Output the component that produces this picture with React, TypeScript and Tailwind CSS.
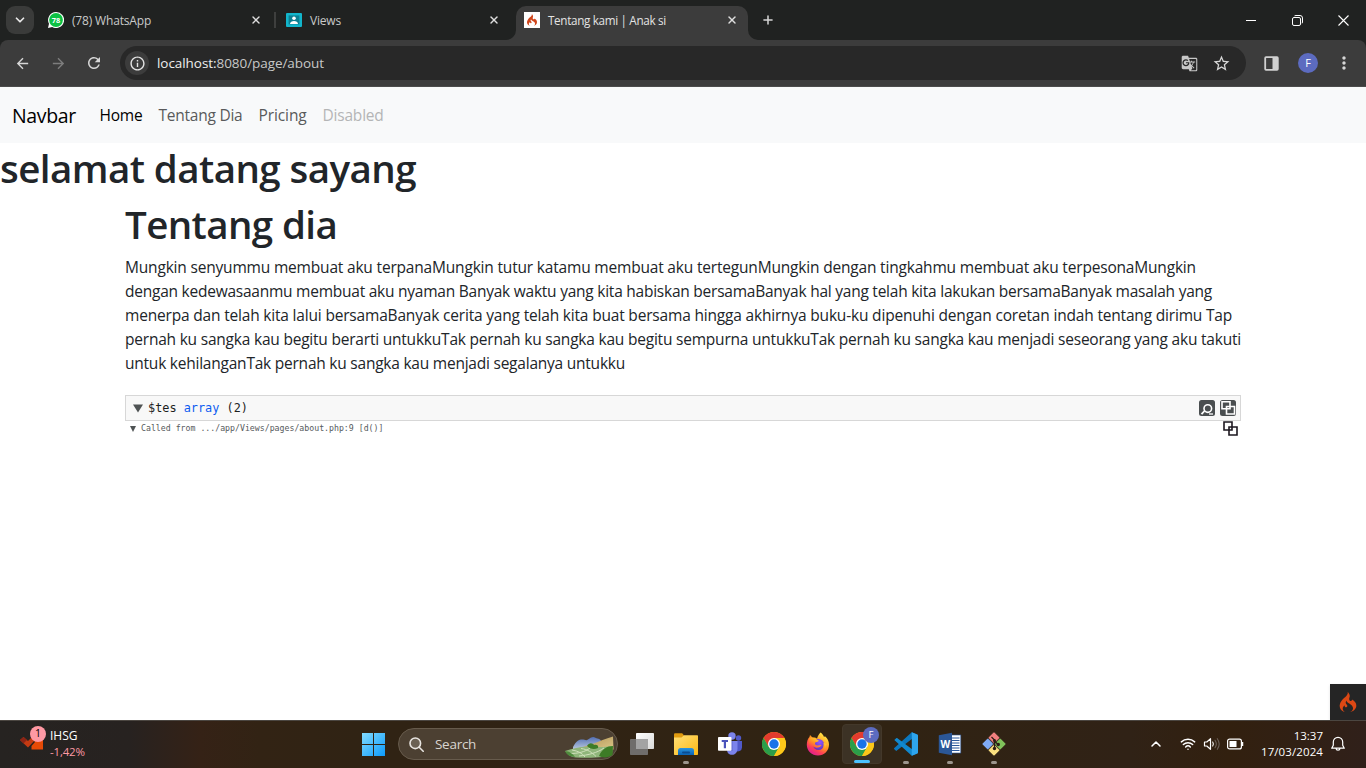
import type { ReactNode } from "react";
import { MdArrowBack, MdArrowForward, MdRefresh, MdInfoOutline, MdGTranslate, MdStarBorder, MdMoreVert } from "react-icons/md";
import { SiCodeigniter } from "react-icons/si";
import { ChevronDown, ChevronUp, X, Plus, Wifi } from "lucide-react";

function WhatsAppIcon() {
  return (
    <svg className="h-4 w-4 shrink-0" viewBox="0 0 16 16">
      <path d="M8 0a8 8 0 1 1-3.8 15L0 16l1-4.2A8 8 0 0 1 8 0Z" fill="#fff" />
      <circle cx="8" cy="8" r="6.9" fill="#0cc143" />
      <text x="8" y="10.6" fontSize="7.4" fontWeight="700" textAnchor="middle" fill="#fff" fontFamily="Open Sans, sans-serif">78</text>
    </svg>
  );
}

function ViewsIcon() {
  return (
    <svg className="h-4 w-4 shrink-0" viewBox="0 0 16 16">
      <rect y="1" width="16" height="14" rx="1" fill="#12b5cb" />
      <rect x="2.6" y="3.4" width="10.8" height="9" fill="#0d7f92" />
      <circle cx="8" cy="6.3" r="1.8" fill="#fff" />
      <path d="M4 12c0-2 2-3 4-3s4 1 4 3Z" fill="#fff" />
    </svg>
  );
}

function ChromeIcon() {
  return (
    <svg className="h-6 w-6" viewBox="0 0 24 24">
      <circle cx="12" cy="12" r="12" fill="#fbbc04" />
      <path d="M12 6H22.4A12 12 0 0 0 1.6 6l5.2 9Z" fill="#e33b2e" />
      <path d="M1.6 6A12 12 0 0 0 12 24l5.2-9L12 12 6.8 15Z" fill="#2b9e4a" />
      <path d="M12 24A12 12 0 0 0 22.4 6H12l5.2 9Z" fill="#fdc81a" />
      <circle cx="12" cy="12" r="6" fill="#fff" />
      <circle cx="12" cy="12" r="4.7" fill="#1a73e8" />
    </svg>
  );
}

function WindowsIcon() {
  return (
    <svg className="h-6 w-6" viewBox="0 0 24 24">
      <defs>
        <linearGradient id="win" x1="0" y1="0" x2="1" y2="1">
          <stop offset="0" stopColor="#82dbff" />
          <stop offset="1" stopColor="#0c9bfb" />
        </linearGradient>
      </defs>
      <path d="M1 1h11v11H1ZM13 1h11v11H13ZM1 13h11v11H1ZM13 13h11v11H13Z" fill="url(#win)" />
    </svg>
  );
}

function LandscapeIcon() {
  return (
    <svg className="h-[22px] w-[50px]" viewBox="0 0 50 22">
      <defs>
        <linearGradient id="sky" x1="0" y1="0" x2="0" y2="1">
          <stop offset="0" stopColor="#526fb5" />
          <stop offset="1" stopColor="#b6c6dc" />
        </linearGradient>
        <linearGradient id="hill" x1="0" y1="0" x2="1" y2="1">
          <stop offset="0" stopColor="#a98b4d" />
          <stop offset="1" stopColor="#e2cd8e" />
        </linearGradient>
      </defs>
      <path d="M9 11c3-6 6-7.500 9-7.500s4 1.500 6 0 5-3.500 7-2 5 .5 6 3.500l-6 8H9Z" fill="url(#sky)" />
      <path d="M10 13c14-2 24-8 39-12.500l.5 13c-8 3-28 5-39.500-.5Z" fill="url(#hill)" />
      <path d="M1 15c10-3 17-5 27-4 9 0 15 0 21-1l-1 8c-5 4-22 4-36 3.500-4-.5-8-2-11-6.500Z" fill="#8fb57a" />
      <path d="M8 14c6 1 10 3 13 7M17 12.500c7 1 11 4 15 8M26 12c-5 4-12 5.500-20 5.500M40 12c-7 5-16 7-25 8" stroke="#cfe0bb" strokeWidth="1" fill="none" />
      <path d="M23 10c2-4 6-3 7-1 2-1 5 0 4 3-4 2-8 1-11-2ZM35 20c3-7 8-10 14-10l-.5 9c-4 3-10 3-13.500 1Z" fill="#3d7c26" />
      <path d="M1 15c4 0 8 3 10 6-5 0-9-3-10-6Z" fill="#4f8a3d" />
    </svg>
  );
}

function TaskViewIcon() {
  return (
    <svg className="h-6 w-6" viewBox="0 0 24 24">
      <defs>
        <linearGradient id="tv" x1="0" y1="0" x2="1" y2="1">
          <stop offset="0" stopColor="#fff" />
          <stop offset="1" stopColor="#d9d9d9" />
        </linearGradient>
      </defs>
      <rect x="6" y="1" width="18" height="16" rx=".8" fill="url(#tv)" />
      <rect x="0" y="7" width="18" height="16" rx=".8" fill="#6f6d6b" />
      <rect x="6" y="7" width="12" height="10" fill="#a3a3a3" />
    </svg>
  );
}

function FolderIcon() {
  return (
    <svg className="h-6 w-6" viewBox="0 0 24 24">
      <defs>
        <linearGradient id="fold" x1="0" y1="0" x2="1" y2="1">
          <stop offset="0" stopColor="#ffe078" />
          <stop offset="1" stopColor="#fdb813" />
        </linearGradient>
        <linearGradient id="dock" x1="0" y1="0" x2="0" y2="1">
          <stop offset="0" stopColor="#2a95de" />
          <stop offset="1" stopColor="#0a63b5" />
        </linearGradient>
      </defs>
      <path d="M0 2.500C0 1.700.6 1.300 1.300 1.300h6.900L10 3.500V8H0Z" fill="#e09b10" />
      <path d="M0 5.500h7.500L10 3.300h13c.6 0 1 .4 1 1V22c0 .6-.4 1-1 1H1c-.6 0-1-.4-1-1Z" fill="url(#fold)" />
      <path d="M4 23v-4.500C4 17 5 16 6.500 16h11c1.500 0 2.500 1 2.500 2.500V23Z" fill="url(#dock)" />
      <rect x="8" y="19.500" width="8" height="2" rx="1" fill="#0a4c92" />
    </svg>
  );
}

function TeamsIcon() {
  return (
    <svg className="h-6 w-6" viewBox="0 0 24 24">
      <circle cx="20.500" cy="6" r="2.700" fill="#5059c9" />
      <circle cx="14" cy="4" r="3.700" fill="#7b83eb" />
      <path d="M16 9h8v6.500a4 4 0 0 1-6.500 3Z" fill="#5059c9" />
      <path d="M9 9h10.500v7.500c0 4-2.500 6.300-5.500 6.300s-5-2-5-5Z" fill="#7b83eb" />
      <path d="M9 9h5.500v10H9Z" fill="#4b53bc" opacity=".6" />
      <rect x="0" y="5" width="13.500" height="13.800" rx=".8" fill="#fff" />
      <path d="M3.700 8h6.300v2H8v6.300H5.800V10H3.700Z" fill="#4b53bc" />
    </svg>
  );
}

function FirefoxIcon() {
  return (
    <svg className="h-6 w-6" viewBox="0 0 24 24">
      <defs>
        <linearGradient id="ff" x1=".85" y1=".05" x2=".2" y2="1">
          <stop offset="0" stopColor="#fff44f" />
          <stop offset=".4" stopColor="#ff9a1f" />
          <stop offset=".7" stopColor="#ff4055" />
          <stop offset="1" stopColor="#d9189b" />
        </linearGradient>
        <radialGradient id="globe" cx=".6" cy=".3" r=".8">
          <stop offset="0" stopColor="#9059ff" />
          <stop offset="1" stopColor="#5b2fb5" />
        </radialGradient>
      </defs>
      <path d="M14.500.5c2 1.300 3 3 3.500 4.500l1-.8c2.600 2 4 5 4 8.300C23 19 18 23.500 12 23.500S.8 19 .8 12.700C.8 9 2 6.500 3.500 5L4 3l2.500 2.600c2.200-.3 3.500.2 4.600 1C11.600 4 13 2 14.500.5Z" fill="url(#ff)" />
      <circle cx="12.500" cy="12.500" r="5.500" fill="url(#globe)" />
      <path d="M3.500 6c2-.9 5.500-.7 7.500 1.800l2 1c-1 1.300-3.500 1-4 2.200-.3 1.700 1 2.700 3 2.500 1.500-.1 2.500-.8 3.500-.5-1 2.500-6 4-9 1C5.500 17 9 19 12 19c5 0 6-4 5.500-8l3 1-1 6-6 4-8-2-4-7Z" fill="url(#ff)" />
    </svg>
  );
}

function VSCodeIcon() {
  return (
    <svg className="h-6 w-6" viewBox="0 0 24 24">
      <path d="M17.800.2 23.200 2.500c.5.2.8.7.8 1.200L17.800 7 2.200 19 .3 17.300c-.4-.4-.4-1 0-1.300Z" fill="#0b77bd" />
      <path d="M.3 8 2.200 6.300c.3-.3.9-.3 1.200 0L17.800 17l6.200 3.300c0 .5-.3 1-.8 1.200l-5.400 2.300Z" fill="#1188ce" />
      <path d="M17.800.2 23.200 2.500c.5.2.8.7.8 1.200v16.600c0 .5-.3 1-.8 1.200l-5.400 2.300Z" fill="#2ea5ed" />
    </svg>
  );
}

function WordIcon() {
  return (
    <svg className="h-6 w-6" viewBox="0 0 24 24">
      <rect x="11" y="3" width="11.800" height="18" fill="#fff" stroke="#2b579a" strokeWidth=".6" />
      <path d="M14 6h7.500M14 8.500h7.500M14 11h7.500M14 13.500h7.500M14 16h7.500M14 18.500h7.500" stroke="#2b579a" strokeWidth="1" />
      <path d="M.8 3.300 14 .8v22.400L.8 20.700Z" fill="#2b5797" />
      <text x="7.400" y="15.800" fontSize="10" fontWeight="700" textAnchor="middle" fill="#fff" fontFamily="Open Sans, sans-serif">W</text>
    </svg>
  );
}

function GitIcon() {
  return (
    <svg className="h-6 w-6" viewBox="0 0 24 24">
      <g stroke="#3a2c20" strokeWidth=".6">
        <rect x="7.800" y="1.500" width="8.400" height="8.400" rx="1" transform="rotate(45 12 5.700)" fill="#f07f7f" />
        <rect x="14" y="7.800" width="8.400" height="8.400" rx="1" transform="rotate(45 18.200 12)" fill="#7fc25a" />
        <rect x="1.600" y="7.800" width="8.400" height="8.400" rx="1" transform="rotate(45 5.800 12)" fill="#7faaf5" />
        <rect x="7.800" y="14" width="8.400" height="8.400" rx="1" transform="rotate(45 12 18.200)" fill="#fbe07f" />
      </g>
      <path d="M9.500 5 12.500 8v9M12.500 9l3.500 3.500" stroke="#2a1c16" strokeWidth="1.200" fill="none" />
      <circle cx="12.500" cy="8.500" r="1.500" fill="#2a1c16" />
      <circle cx="12.500" cy="16.500" r="1.700" fill="#2a1c16" />
      <circle cx="16.300" cy="12.500" r="1.700" fill="#2a1c16" />
    </svg>
  );
}

function StockIcon() {
  return (
    <svg className="h-6 w-6" viewBox="0 0 24 24">
      <path d="M0 10 3.500 7 8 11l4-4 3 3-7 7.500Z" fill="#c43a12" />
      <path d="m0 10 3.500-3L7 10l-3.500 3.500Z" fill="#8c2516" />
      <path d="M12 7h11v12.500H11.500V16L15 12Z" fill="#e64a06" />
    </svg>
  );
}

function SpeakerIcon() {
  return (
    <svg className="h-4 w-[18px]" viewBox="0 0 18 16" fill="none" strokeLinecap="round">
      <path d="M1.500 6h2.300L7.500 2.700v10.600L3.800 10H1.500Z" stroke="#fff" strokeWidth="1.200" strokeLinejoin="round" />
      <path d="M9.700 6c.8 1.200.8 2.800 0 4" stroke="#fff" strokeWidth="1.100" />
      <path d="M12 4.300c1.600 2.200 1.600 5.200 0 7.400M14.300 2.700c2.300 3.200 2.300 7.400 0 10.600" stroke="#6a5f57" strokeWidth="1.100" />
    </svg>
  );
}

function BatteryIcon() {
  return (
    <svg className="h-3 w-[17px]" viewBox="0 0 17 12">
      <rect x=".6" y="1.100" width="13.800" height="9.800" rx="2" fill="none" stroke="#fff" strokeWidth="1.200" />
      <rect x="2.500" y="3" width="7" height="6" fill="#fff" />
      <path d="M15.500 4v4" stroke="#fff" strokeWidth="1.500" />
    </svg>
  );
}

function BellIcon() {
  return (
    <svg className="h-4 w-4" viewBox="0 0 16 16" fill="none" stroke="#fff" strokeWidth="1.200" strokeLinejoin="round">
      <path d="M8 1.300a4.700 4.700 0 0 0-4.700 4.700v3.200L1.700 12.200h12.600l-1.600-3V6A4.700 4.700 0 0 0 8 1.300ZM6 12.400c.2 2.400 3.800 2.400 4 0" />
    </svg>
  );
}

function TabFlare({ flip = false }: { flip?: boolean }) {
  return (
    <svg className={flip ? "absolute bottom-0 -right-[10px] h-[10px] w-[10px] -scale-x-100" : "absolute bottom-0 -left-[10px] h-[10px] w-[10px]"} viewBox="0 0 10 10">
      <path d="M10 0v10H0A10 10 0 0 0 10 0Z" fill="#3c3c3c" />
    </svg>
  );
}

function CloseTab() {
  return <X className="ml-auto h-3 w-3 text-[#dedede]" strokeWidth={2.800} />;
}

function TabStrip() {
  return (
    <div className="flex h-10 shrink-0 bg-[#202221] pl-1.5 text-[12px] text-[#c9cac9]">
      <div className="mt-1.5 flex h-7 w-7 items-center justify-center rounded-[9px] bg-[#3a3b3a]">
        <ChevronDown className="h-3.5 w-3.5 text-[#e8e8e8]" strokeWidth={3} />
      </div>
      <div className="ml-3.5 flex h-10 w-[214px] items-center">
        <WhatsAppIcon />
        <span className="ml-2 pt-0.5 tracking-[-0.17px]">(78) WhatsApp</span>
        <CloseTab />
      </div>
      <div className="mt-3 ml-[12px] h-4 w-0.5 bg-[#3e3f3e]" />
      <div className="ml-[10px] flex h-10 w-[214px] items-center">
        <ViewsIcon />
        <span className="ml-2 pt-0.5 tracking-[-0.2px]">Views</span>
        <CloseTab />
      </div>
      <div className="relative mt-1.5 ml-4 flex h-[34px] w-[232px] items-center rounded-t-[10px] bg-[#3c3c3c] px-2 pb-1.5 text-[#e3e3e3]">
        <TabFlare />
        <span className="flex h-4 w-4 items-center justify-center bg-white">
          <SiCodeigniter className="h-3 w-3 text-[#d0451b]" />
        </span>
        <span className="ml-2 pt-0.5 text-[11.7px] tracking-[-0.33px]">Tentang kami | Anak si</span>
        <CloseTab />
        <span className="w-0.5" />
        <TabFlare flip />
      </div>
      <div className="flex w-10 items-center justify-center">
        <Plus className="h-3.5 w-3.5 text-[#d5d5d5]" strokeWidth={2.600} />
      </div>
      <div className="ml-auto flex items-center">
        <div className="flex w-[46px] justify-center"><span className="h-px w-[10px] bg-white" /></div>
        <div className="flex w-[46px] justify-center">
          <svg className="h-[11px] w-[11px]" viewBox="0 0 11 11" fill="none" stroke="#fff" strokeWidth="1">
            <rect x=".5" y="2.500" width="8" height="8" rx="1.500" />
            <path d="M2.500.8 4 .5h4a2.500 2.500 0 0 1 2.500 2.500v4l-.4 1.300" />
          </svg>
        </div>
        <div className="flex w-[46px] justify-center">
          <svg className="h-[11px] w-[11px]" viewBox="0 0 11 11" stroke="#fff" strokeWidth="1.100"><path d="m.5.5 10 10m0-10-10 10" /></svg>
        </div>
      </div>
    </div>
  );
}

function Toolbar() {
  return (
    <div className="shrink-0 bg-[#202221]">
      <div className="flex h-[47px] items-center rounded-t-[8px] border-b border-[#4b4b4b] bg-[#3c3c3c] pl-3.5 text-[#d6d6d6]">
        <MdArrowBack className="h-[17px] w-[17px]" />
        <MdArrowForward className="ml-[19px] h-[17px] w-[17px] text-[#7d7d7d]" />
        <MdRefresh className="ml-[18px] h-[18px] w-[18px]" />
        <div className="ml-[17px] flex h-[34px] w-[1126px] items-center rounded-full bg-[#282828] pl-[5px]">
          <span className="flex h-6 w-6 items-center justify-center rounded-full bg-[#3c3c3c]">
            <MdInfoOutline className="h-[17px] w-[17px] text-[#e3e3e3]" />
          </span>
          <span className="ml-2 text-[13.5px] tracking-[-0.06px] text-[#c7c7c7]"><span className="text-[#eeeeee]">localhost:</span>8080/page/about</span>
          <MdGTranslate className="ml-auto h-[17px] w-[17px] text-[#c7c7c7]" />
          <MdStarBorder className="mr-[15px] ml-[14px] h-[19px] w-[19px] text-[#d6d6d6]" />
        </div>
        <svg className="ml-[18px] h-[15px] w-[15px]" viewBox="0 0 15 15">
          <rect x="1.200" y="1.200" width="12.600" height="12.600" rx=".8" fill="none" stroke="#d0d0d0" strokeWidth="1.800" />
          <path d="M8.500 1h5v13h-5Z" fill="#d0d0d0" />
        </svg>
        <span className="ml-[19px] flex h-5 w-5 items-center justify-center rounded-full bg-[#5c6bc0] text-[11px] text-white">F</span>
        <MdMoreVert className="ml-[16px] h-5 w-5" />
      </div>
    </div>
  );
}

const paragraph: { text: string; className: string }[] = [
  { text: "Mungkin senyummu membuat aku terpanaMungkin tutur katamu membuat aku tertegunMungkin dengan tingkahmu membuat aku terpesonaMungkin", className: "tracking-[-0.185px]" },
  { text: "dengan kedewasaanmu membuat aku nyaman Banyak waktu yang kita habiskan bersamaBanyak hal yang telah kita lakukan bersamaBanyak masalah yang", className: "tracking-[-0.24px]" },
  { text: "menerpa dan telah kita lalui bersamaBanyak cerita yang telah kita buat bersama hingga akhirnya buku-ku dipenuhi dengan coretan indah tentang dirimu Tap", className: "tracking-[-0.184px]" },
  { text: "pernah ku sangka kau begitu berarti untukkuTak pernah ku sangka kau begitu sempurna untukkuTak pernah ku sangka kau menjadi seseorang yang aku takuti", className: "tracking-[-0.212px]" },
  { text: "untuk kehilanganTak pernah ku sangka kau menjadi segalanya untukku", className: "tracking-[-0.229px]" },
];

function Page() {
  return (
    <main className="flex h-[633px] flex-col bg-white text-[#212529]">
      <nav className="flex h-14 shrink-0 items-center bg-[#f8f9fa] pt-px pl-3 text-[15.5px]">
        <span className="w-[87.5px] text-[19.5px] tracking-[-0.33px] text-black">Navbar</span>
        <span className="w-[59px] tracking-[-0.2px] text-black">Home</span>
        <span className="w-[100px] tracking-[-0.24px] text-[#595a5b]">Tentang Dia</span>
        <span className="w-[64px] tracking-[-0.1px] text-[#595a5b]">Pricing</span>
        <span className="tracking-[-0.2px] text-[#b4b5b6]">Disabled</span>
      </nav>
      <h1 className="mb-2 pt-0.5 text-[38.5px] leading-[46px] font-semibold tracking-[-0.56px] whitespace-nowrap">selamat datang sayang</h1>
      <div className="ml-[125px] w-[1116px]">
        <h1 className="mb-2 pt-0.5 text-[38.5px] leading-[46px] font-semibold tracking-[-0.6px]">Tentang dia</h1>
        <p className="text-[15.5px] leading-6 whitespace-nowrap">
          {paragraph.map((line) => (
            <span key={line.text} className={`block ${line.className}`}>{line.text}</span>
          ))}
        </p>
        <div className="mt-5 flex h-[26px] items-center border border-[#d7d7d7] bg-[#f8f8f8] pr-1 pl-[7px] font-['DejaVu_Sans_Mono',monospace] text-[11.87px] text-[#1d1e1e]">
          <svg className="h-[9px] w-[10px]" viewBox="0 0 10 9"><path d="M0 .5h10L5 8.500Z" fill="#4f5354" /></svg>
          <span className="ml-[5px] pt-0.5 whitespace-pre">$tes <span className="text-[#0d5cf0]">array</span> (2)</span>
          <svg className="ml-auto h-4 w-4" viewBox="0 0 16 16" fill="none">
            <rect width="16" height="16" rx="2.500" fill="#4a4e50" />
            <path d="m2.500 14.200 3-3.200" stroke="#fff" strokeWidth="1.800" />
            <circle cx="8.800" cy="8.600" r="3.800" stroke="#fff" strokeWidth="1.600" />
            <path d="M10 14h4" stroke="#fff" strokeWidth="1.300" />
          </svg>
          <svg className="ml-[5px] h-4 w-4" viewBox="0 0 16 16" fill="none">
            <rect width="16" height="16" rx="2.500" fill="#4a4e50" />
            <path d="M2 1.800h8v7H2ZM6.500 6.500h8v7.500h-8Z" stroke="#fff" strokeWidth="1.600" />
          </svg>
        </div>
        <div className="flex h-[15px] items-center pr-[3px] pl-[5px] font-['DejaVu_Sans_Mono',monospace] text-[8.23px] text-[#565a5c]">
          <svg className="h-[6px] w-[6px]" viewBox="0 0 6 6"><path d="M0 0h6L3 6Z" fill="#4f5354" /></svg>
          <span className="ml-[5px]">Called from .../app/Views/pages/about.php:9 [d()]</span>
          <svg className="ml-auto h-[15px] w-[15px]" viewBox="0 0 15 15" fill="none">
            <path d="M1 1h8v8H1ZM6 6h8v8H6Z" stroke="#1d1820" strokeWidth="1.600" />
          </svg>
        </div>
      </div>
      <div className="mt-auto ml-auto flex h-9 w-9 items-center justify-center bg-[#252525] shadow">
        <SiCodeigniter className="h-[20px] w-[20px] text-[#dd4814]" />
      </div>
    </main>
  );
}

function TaskSlot({ children, state = "idle" }: { children: ReactNode; state?: "idle" | "open" | "active" }) {
  return (
    <div className="flex w-11 justify-center">
      <div className={state === "active" ? "relative mt-[3px] flex h-10 w-10 justify-center rounded-[4px] border border-[#43382a] bg-[#3c3225] pt-[7px]" : "relative mt-[3px] flex h-10 w-10 justify-center pt-2"}>
        {children}
        {state === "open" && <span className="absolute bottom-0 h-[3px] w-1.5 rounded-full bg-[#9c958d]" />}
        {state === "active" && <span className="absolute bottom-0 h-[3px] w-4 rounded-full bg-[#4cc2ff]" />}
      </div>
    </div>
  );
}

function Taskbar() {
  return (
    <footer className="flex h-12 shrink-0 border-t border-[#4b4641] bg-[linear-gradient(90deg,#262321_0px,#272220_130px,#352216_200px,#322314_260px,#302314_360px,#302313_900px,#302216_1130px,#32200f_1230px,#30201a_1366px)]">
      <div className="flex w-[361px] pl-5">
        <div className="relative mt-1.5 h-7 w-7">
          <div className="pt-[3px]"><StockIcon /></div>
          <span className="absolute -top-px left-[10px] flex h-4 w-4 items-center justify-center rounded-full bg-[#ff99a4] text-[10.5px] text-black">1</span>
        </div>
        <div className="mt-[7px] ml-[2px] text-[12px] leading-4">
          <div className="text-white">IHSG</div>
          <div className="text-[11.5px] tracking-[-0.2px] text-[#ff99a4]">-1,42%</div>
        </div>
      </div>
      <div className="mt-[11px] w-[37px]"><WindowsIcon /></div>
      <div className="mt-[7px] flex h-8 w-[220px] items-center rounded-full border border-[#675b4c] bg-[#4c4032] pl-[10px]">
        <svg className="h-[15px] w-[15px]" viewBox="0 0 15 15" fill="none" stroke="#e8e5e1" strokeWidth="1.600" strokeLinecap="round">
          <circle cx="6.300" cy="6.300" r="5.300" fill="#6b6154" />
          <path d="m10.200 10.200 4 4" />
        </svg>
        <span className="ml-[11px] text-[13.5px] tracking-[-0.28px] text-[#d8d4cf]">Search</span>
        <div className="mt-[5px] mr-[3px] ml-auto"><LandscapeIcon /></div>
      </div>
      <div className="ml-0.5 flex">
        <TaskSlot><TaskViewIcon /></TaskSlot>
        <TaskSlot state="open"><FolderIcon /></TaskSlot>
        <TaskSlot><TeamsIcon /></TaskSlot>
        <TaskSlot><ChromeIcon /></TaskSlot>
        <TaskSlot><FirefoxIcon /></TaskSlot>
        <TaskSlot state="active">
          <ChromeIcon />
          <span className="absolute top-[2px] right-[2px] flex h-4 w-4 items-center justify-center rounded-full bg-[#5c6bc0] text-[9.5px] text-white">F</span>
        </TaskSlot>
        <TaskSlot state="open"><VSCodeIcon /></TaskSlot>
        <TaskSlot state="open"><WordIcon /></TaskSlot>
        <TaskSlot state="open"><GitIcon /></TaskSlot>
      </div>
      <div className="ml-auto flex items-center pb-px text-white">
        <ChevronUp className="h-4 w-4" strokeWidth={2.300} />
        <Wifi className="ml-4 h-4 w-4" strokeWidth={2.200} />
        <span className="ml-[7px]"><SpeakerIcon /></span>
        <span className="ml-[6px]"><BatteryIcon /></span>
        <div className="ml-[16px] w-[63px] text-right text-[11.5px] leading-4">
          <div>13:37</div>
          <div className="tracking-[0.1px]">17/03/2024</div>
        </div>
        <span className="mr-5 ml-[7px]"><BellIcon /></span>
      </div>
    </footer>
  );
}

export default function App() {
  return (
    <div className="flex h-[768px] w-[1366px] flex-col overflow-hidden font-['Open_Sans','Noto_Sans',sans-serif]">
      <TabStrip />
      <Toolbar />
      <Page />
      <Taskbar />
    </div>
  );
}
